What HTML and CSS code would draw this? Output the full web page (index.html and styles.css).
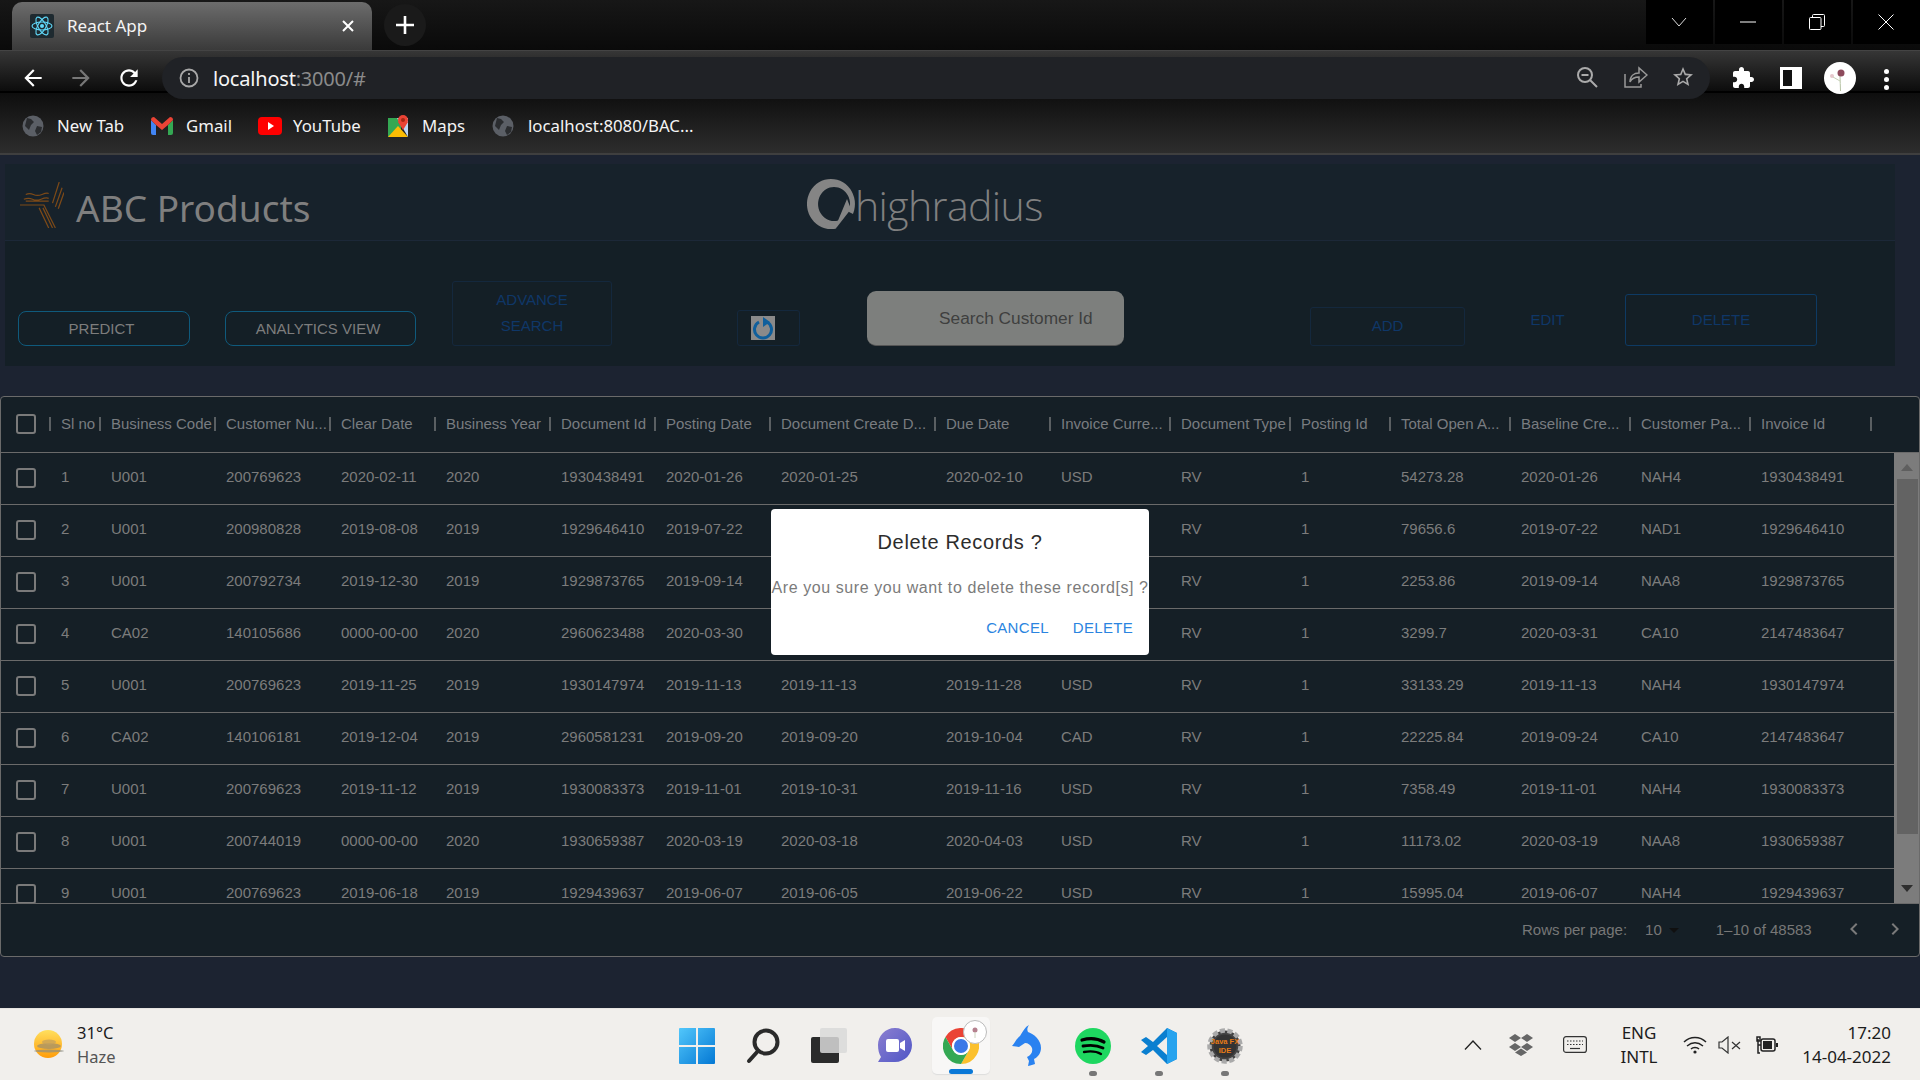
FILE: index.html
```html
<!DOCTYPE html>
<html lang="en">
<head>
<meta charset="utf-8">
<title>React App</title>
<link rel="stylesheet" href="styles.css">
</head>
<body>
<header class="chrome">
  <div class="tabstrip">
    <div class="tab">
      <span class="favicon"><svg viewBox="0 0 24 24" width="24" height="24" fill="none" stroke="#61dafb" stroke-width="1.1"><ellipse cx="12" cy="12" rx="10" ry="4"/><ellipse cx="12" cy="12" rx="10" ry="4" transform="rotate(60 12 12)"/><ellipse cx="12" cy="12" rx="10" ry="4" transform="rotate(120 12 12)"/><circle cx="12" cy="12" r="2" fill="#61dafb" stroke="none"/></svg></span>
      <span class="tab-title">React App</span>
      <svg class="tab-close" viewBox="0 0 12 12" width="12" height="12" stroke="#fff" stroke-width="2"><path d="M1 1l10 10M11 1L1 11"/></svg>
    </div>
    <div class="newtab"><svg viewBox="0 0 18 18" width="18" height="18" stroke="#fff" stroke-width="2.6"><path d="M9 0v18M0 9h18"/></svg></div>
    <div class="winctl">
      <span class="winbtn"><svg viewBox="0 0 16 10" width="16" height="10" fill="none" stroke="#ddd"><path d="M1 1l7 8 7-8"/></svg></span>
      <span class="winbtn"><svg viewBox="0 0 16 2" width="16" height="2" stroke="#fff"><path d="M0 1h16"/></svg></span>
      <span class="winbtn"><svg viewBox="0 0 16 16" width="16" height="16" fill="none" stroke="#fff"><rect x=".5" y="3.5" width="11.5" height="12" rx="1"/><path d="M3.500 3V1.500q0-1 1-1h10q1 0 1 1v10q0 1-1 1H12"/></svg></span>
      <span class="winbtn"><svg viewBox="0 0 16 16" width="16" height="16" stroke="#fff"><path d="M.5.500l15 15M15.500.500l-15 15"/></svg></span>
    </div>
  </div>
  <div class="toolbar">
    <svg class="nav nav-back" viewBox="0 0 24 24" fill="#fff"><path d="M20 11H7.830l5.590-5.590L12 4l-8 8 8 8 1.410-1.410L7.830 13H20v-2z"/></svg>
    <svg class="nav nav-fwd" viewBox="0 0 24 24" fill="#777"><path d="M4 13h12.170l-5.590 5.590L12 20l8-8-8-8-1.410 1.410L16.170 11H4v2z"/></svg>
    <svg class="nav nav-reload" viewBox="0 0 24 24" fill="#fff"><path d="M17.650 6.350C16.200 4.900 14.210 4 12 4c-4.420 0-7.990 3.580-7.990 8s3.570 8 7.990 8c3.730 0 6.840-2.550 7.730-6h-2.080c-.82 2.330-3.040 4-5.650 4-3.310 0-6-2.690-6-6s2.690-6 6-6c1.660 0 3.140.69 4.220 1.780L13 11h7V4l-2.350 2.350z"/></svg>
    <div class="omnibox">
      <svg class="info" viewBox="0 0 20 20" width="20" height="20" fill="none" stroke="#a8a8a8" stroke-width="1.800"><circle cx="10" cy="10" r="8.500"/><path d="M10 9v6M10 5v2"/></svg>
      <span class="url">localhost<span class="url-dim">:3000/#</span></span>
      <svg class="omni-zoom" viewBox="0 0 22 22" width="22" height="22" fill="none" stroke="#aaa" stroke-width="2"><circle cx="9" cy="9" r="7"/><path d="M14 14l7 7M5.500 9h7"/></svg>
      <svg class="omni-share" viewBox="0 0 24 22" width="24" height="22" fill="none" stroke="#999" stroke-width="1.500"><path d="M1 8v13h16v-3"/><path d="M6 16c0-6 4-9 9-9V2l8 7-8 7v-5c-4 0-7 1-9 5z"/></svg>
      <svg class="omni-star" viewBox="0 0 24 24" width="24" height="24" fill="#aaa"><path d="M22 9.240l-7.190-.62L12 2 9.190 8.630 2 9.240l5.460 4.730L5.820 21 12 17.270 18.180 21l-1.630-7.030L22 9.240zM12 15.400l-3.760 2.270 1-4.280-3.320-2.880 4.380-.38L12 6.100l1.710 4.040 4.380.38-3.320 2.880 1 4.280L12 15.400z"/></svg>
    </div>
    <svg class="ext" viewBox="0 0 24 24" width="24" height="24" fill="#fff"><path d="M20.500 11H19V7c0-1.100-.9-2-2-2h-4V3.500C13 2.120 11.880 1 10.500 1S8 2.120 8 3.500V5H4c-1.100 0-1.990.9-1.990 2v3.800H3.500c1.490 0 2.700 1.210 2.700 2.700s-1.210 2.700-2.700 2.700H2V20c0 1.100.9 2 2 2h3.800v-1.500c0-1.490 1.210-2.700 2.700-2.700 1.490 0 2.700 1.210 2.700 2.700V22H17c1.100 0 2-.9 2-2v-4h1.500c1.380 0 2.500-1.120 2.500-2.500S21.880 11 20.500 11z"/></svg>
    <span class="sidepanel"></span>
    <span class="avatar"><svg viewBox="0 0 32 32" width="32" height="32"><path d="M16 14c0 5 .5 10 .5 15" stroke="#b6c2a4" fill="none"/><circle cx="17" cy="11" r="3.500" fill="#8d4b5c"/><circle cx="8" cy="14" r="2" fill="#e6c7cc"/><path d="M9 15l7 4" stroke="#c6d0b6" fill="none"/></svg></span>
    <span class="kebab"><i></i><i></i><i></i></span>
  </div>
  <div class="bookmarks">
    <span class="bm bm-newtab"><svg viewBox="0 0 22 22" width="22" height="22"><circle cx="11" cy="11" r="10.500" fill="#5b5f66"/><path d="M5 3l4 1 3 3-3 3-2 5-4-4zM15 11l5 1-1 5-4 3-2-4z" fill="#2a2c2f"/></svg><span>New Tab</span></span>
    <span class="bm bm-gmail"><svg viewBox="0 0 22 18" width="22" height="18"><path d="M0 3v13q0 2 2 2h3V8z" fill="#4285f4"/><path d="M22 3v13q0 2-2 2h-3V8z" fill="#34a853"/><path d="M0 3q0-3 3-3l8 7 8-7q3 0 3 3l-5 5-6 5-6-5z" fill="#ea4335"/></svg><span>Gmail</span></span>
    <span class="bm bm-yt"><svg viewBox="0 0 24 18" width="24" height="18"><rect width="24" height="18" rx="4" fill="#f00"/><path d="M10 5l6 4-6 4z" fill="#fff"/></svg><span>YouTube</span></span>
    <span class="bm bm-maps"><svg viewBox="0 0 22 24" width="22" height="24"><path d="M1 4h13v19H1z" fill="#34a853"/><path d="M1 23l10-11 10 11z" fill="#fbbc04"/><path d="M10 4h11v19z" fill="#bcd6f7"/><circle cx="16" cy="6" r="5" fill="#ea4335"/><path d="M11 8l5 8 5-8z" fill="#ea4335"/><circle cx="16" cy="6" r="2" fill="#a52714"/></svg><span>Maps</span></span>
    <span class="bm bm-local"><svg viewBox="0 0 22 22" width="22" height="22"><circle cx="11" cy="11" r="10.500" fill="#5b5f66"/><path d="M5 3l4 1 3 3-3 3-2 5-4-4zM15 11l5 1-1 5-4 3-2-4z" fill="#2a2c2f"/></svg><span>localhost:8080/BAC...</span></span>
  </div>
</header>

<main class="page">
  <section class="brand">
    <svg class="abc-logo" viewBox="0 0 46 48" width="44" height="46" fill="none" stroke="#7d4a18" stroke-width="1.300"><path d="M41 0L34 22M44 6L37 26M46 11L40 28M0 24h25l12 24M24 27l10 21M20 27l10 21"/><path d="M6 13q4-2 8 0t9 0 7-1M4 18q5-2 9 0t9 0 8-1M6 20h24"/></svg>
    <span class="abc-name">ABC Products</span>
    <svg class="hr-logo" viewBox="0 0 48 50" width="48" height="50"><path fill-rule="evenodd" fill="#858585" d="M24 0a24 25 0 1 1-.1 0zM27 8a16 17 0 1 0 .1 0z"/><path d="M36 30L48 36 38 50 29 50z" fill="#17222b"/><path d="M40 20L44 30 30 48 20 49 14 36 20 47 30 44z" fill="#858585"/></svg>
    <span class="hr-name">highradius</span>
  </section>
  <section class="actions">
    <button class="btn btn-predict">PREDICT</button>
    <button class="btn btn-analytics">ANALYTICS VIEW</button>
    <button class="btn-blue btn-advance">ADVANCE SEARCH</button>
    <button class="btn-blue btn-refresh"><svg viewBox="0 0 24 24" width="24" height="24"><rect width="24" height="24" fill="#8a8a8a"/><path d="M8 6a8.500 8.500 0 1 0 8 0" fill="none" stroke="#0f5f9c" stroke-width="3"/><path d="M12 1l7 5-7 5z" fill="#0f5f9c"/></svg></button>
    <div class="search"><span>Search Customer Id</span></div>
    <button class="btn-blue btn-add">ADD</button>
    <span class="btn-edit">EDIT</span>
    <button class="btn-blue btn-delete">DELETE</button>
  </section>

  <section class="grid-paper">
    <div class="grid-head cols">
      <div class="hc"><span class="cb"></span></div>
      <div class="hc">Sl no</div>
      <div class="hc">Business Code</div>
      <div class="hc">Customer Nu...</div>
      <div class="hc">Clear Date</div>
      <div class="hc">Business Year</div>
      <div class="hc">Document Id</div>
      <div class="hc">Posting Date</div>
      <div class="hc">Document Create D...</div>
      <div class="hc">Due Date</div>
      <div class="hc">Invoice Curre...</div>
      <div class="hc">Document Type</div>
      <div class="hc">Posting Id</div>
      <div class="hc">Total Open A...</div>
      <div class="hc">Baseline Cre...</div>
      <div class="hc">Customer Pa...</div>
      <div class="hc">Invoice Id</div>
    </div>
    <div class="grid-body">
      <div class="rows">
        <div class="row cols"><div class="c"><span class="cb"></span></div><div class="c">1</div><div class="c">U001</div><div class="c">200769623</div><div class="c">2020-02-11</div><div class="c">2020</div><div class="c">1930438491</div><div class="c">2020-01-26</div><div class="c">2020-01-25</div><div class="c">2020-02-10</div><div class="c">USD</div><div class="c">RV</div><div class="c">1</div><div class="c">54273.28</div><div class="c">2020-01-26</div><div class="c">NAH4</div><div class="c">1930438491</div></div>
        <div class="row cols"><div class="c"><span class="cb"></span></div><div class="c">2</div><div class="c">U001</div><div class="c">200980828</div><div class="c">2019-08-08</div><div class="c">2019</div><div class="c">1929646410</div><div class="c">2019-07-22</div><div class="c"></div><div class="c"></div><div class="c"></div><div class="c">RV</div><div class="c">1</div><div class="c">79656.6</div><div class="c">2019-07-22</div><div class="c">NAD1</div><div class="c">1929646410</div></div>
        <div class="row cols"><div class="c"><span class="cb"></span></div><div class="c">3</div><div class="c">U001</div><div class="c">200792734</div><div class="c">2019-12-30</div><div class="c">2019</div><div class="c">1929873765</div><div class="c">2019-09-14</div><div class="c"></div><div class="c"></div><div class="c"></div><div class="c">RV</div><div class="c">1</div><div class="c">2253.86</div><div class="c">2019-09-14</div><div class="c">NAA8</div><div class="c">1929873765</div></div>
        <div class="row cols"><div class="c"><span class="cb"></span></div><div class="c">4</div><div class="c">CA02</div><div class="c">140105686</div><div class="c">0000-00-00</div><div class="c">2020</div><div class="c">2960623488</div><div class="c">2020-03-30</div><div class="c"></div><div class="c"></div><div class="c"></div><div class="c">RV</div><div class="c">1</div><div class="c">3299.7</div><div class="c">2020-03-31</div><div class="c">CA10</div><div class="c">2147483647</div></div>
        <div class="row cols"><div class="c"><span class="cb"></span></div><div class="c">5</div><div class="c">U001</div><div class="c">200769623</div><div class="c">2019-11-25</div><div class="c">2019</div><div class="c">1930147974</div><div class="c">2019-11-13</div><div class="c">2019-11-13</div><div class="c">2019-11-28</div><div class="c">USD</div><div class="c">RV</div><div class="c">1</div><div class="c">33133.29</div><div class="c">2019-11-13</div><div class="c">NAH4</div><div class="c">1930147974</div></div>
        <div class="row cols"><div class="c"><span class="cb"></span></div><div class="c">6</div><div class="c">CA02</div><div class="c">140106181</div><div class="c">2019-12-04</div><div class="c">2019</div><div class="c">2960581231</div><div class="c">2019-09-20</div><div class="c">2019-09-20</div><div class="c">2019-10-04</div><div class="c">CAD</div><div class="c">RV</div><div class="c">1</div><div class="c">22225.84</div><div class="c">2019-09-24</div><div class="c">CA10</div><div class="c">2147483647</div></div>
        <div class="row cols"><div class="c"><span class="cb"></span></div><div class="c">7</div><div class="c">U001</div><div class="c">200769623</div><div class="c">2019-11-12</div><div class="c">2019</div><div class="c">1930083373</div><div class="c">2019-11-01</div><div class="c">2019-10-31</div><div class="c">2019-11-16</div><div class="c">USD</div><div class="c">RV</div><div class="c">1</div><div class="c">7358.49</div><div class="c">2019-11-01</div><div class="c">NAH4</div><div class="c">1930083373</div></div>
        <div class="row cols"><div class="c"><span class="cb"></span></div><div class="c">8</div><div class="c">U001</div><div class="c">200744019</div><div class="c">0000-00-00</div><div class="c">2020</div><div class="c">1930659387</div><div class="c">2020-03-19</div><div class="c">2020-03-18</div><div class="c">2020-04-03</div><div class="c">USD</div><div class="c">RV</div><div class="c">1</div><div class="c">11173.02</div><div class="c">2020-03-19</div><div class="c">NAA8</div><div class="c">1930659387</div></div>
        <div class="row cols"><div class="c"><span class="cb"></span></div><div class="c">9</div><div class="c">U001</div><div class="c">200769623</div><div class="c">2019-06-18</div><div class="c">2019</div><div class="c">1929439637</div><div class="c">2019-06-07</div><div class="c">2019-06-05</div><div class="c">2019-06-22</div><div class="c">USD</div><div class="c">RV</div><div class="c">1</div><div class="c">15995.04</div><div class="c">2019-06-07</div><div class="c">NAH4</div><div class="c">1929439637</div></div>
      </div>
      <div class="scrollbar">
        <span class="sb-up"></span>
        <span class="sb-thumb"></span>
        <span class="sb-down"></span>
      </div>
    </div>
    <div class="grid-foot">
      <span class="rpp">Rows per page:</span>
      <span class="rpp-val">10</span><span class="rpp-caret"></span>
      <span class="range">1–10 of 48583</span>
      <svg class="pg pg-prev" viewBox="0 0 24 24" width="24" height="24" fill="#7a7a7a"><path d="M15.410 7.410L14 6l-6 6 6 6 1.410-1.410L10.830 12z"/></svg>
      <svg class="pg pg-next" viewBox="0 0 24 24" width="24" height="24" fill="#7a7a7a"><path d="M10 6L8.590 7.410 13.170 12l-4.580 4.590L10 18l6-6z"/></svg>
    </div>
  </section>
</main>

<footer class="taskbar">
  <div class="weather">
    <svg viewBox="0 0 32 30" width="32" height="30"><defs><linearGradient id="sun" x1="0" y1="0" x2="0" y2="1"><stop offset="0" stop-color="#ffdf5e"/><stop offset="1" stop-color="#ff9d0a"/></linearGradient></defs><circle cx="16" cy="14" r="14" fill="url(#sun)"/><ellipse cx="17" cy="16" rx="12" ry="3" fill="#a89266" opacity=".8"/><ellipse cx="17" cy="21" rx="15" ry="1.500" fill="#8d8d80" opacity=".7"/><ellipse cx="17" cy="12" rx="7" ry="2.500" fill="#c7a35c" opacity=".8"/></svg>
    <div class="weather-text"><span class="temp">31°C</span><span class="cond">Haze</span></div>
  </div>
  <div class="apps">
    <span class="app"><svg viewBox="0 0 36 36" width="36" height="36"><defs><linearGradient id="win" x1="0" y1="0" x2="1" y2="1"><stop offset="0" stop-color="#52c7fb"/><stop offset="1" stop-color="#0478d4"/></linearGradient></defs><path d="M1 0h16v17H0V1q0-1 1-1zM19 0h16q1 0 1 1v16H19zM0 19h17v17H1q-1 0-1-1zM19 19h17v16q0 1-1 1H19z" fill="url(#win)"/></svg></span>
    <span class="app"><svg viewBox="0 0 34 36" width="34" height="36" fill="none" stroke="#2a2a2a" stroke-width="4" stroke-linecap="round"><circle cx="20" cy="14" r="11.500"/><path d="M12 23L3 33"/></svg></span>
    <span class="app app-tv"><svg viewBox="0 0 36 36" width="36" height="36"><rect x="0" y="9" width="28" height="26" rx="2" fill="#2b2b2b"/><rect x="9" y="0" width="27" height="25" rx="2" fill="#d9d9d9" opacity=".85"/></svg></span>
    <span class="app"><svg viewBox="0 0 36 36" width="36" height="36"><defs><linearGradient id="chat" x1="0" y1="0" x2="1" y2="1"><stop offset="0" stop-color="#8c7fd0"/><stop offset="1" stop-color="#4f56c6"/></linearGradient></defs><path d="M18 0c10 0 17 8 17 17s-7 17-17 17H1l3-5C2 26 1 22 1 17 1 8 8 0 18 0z" fill="url(#chat)"/><rect x="9" y="11" width="13" height="13" rx="2" fill="#fff"/><path d="M23 15l5-3v11l-5-3z" fill="#fff"/></svg></span>
    <span class="app app-active"><span class="chrome-ico"><svg viewBox="0 0 36 36" width="36" height="36"><path d="M2.400 9A18 18 0 0 1 33.600 9H18A9 9 0 0 0 10.200 22.500z" fill="#ea4335"/><path d="M33.600 9A18 18 0 0 1 18 36L25.800 22.500A9 9 0 0 0 18 9z" fill="#fbc02d"/><path d="M2.400 9L10.200 22.500A9 9 0 0 0 25.800 22.500L18 36A18 18 0 0 1 2.400 9z" fill="#34a853"/><circle cx="18" cy="18" r="9" fill="#fff"/><circle cx="18" cy="18" r="7" fill="#3b78e7"/></svg></span><span class="chrome-badge"><svg viewBox="0 0 24 24" width="24" height="24"><circle cx="12" cy="12" r="11.500" fill="#fff" stroke="#bbb"/><circle cx="12" cy="10" r="2.500" fill="#b5818e"/><path d="M12 12v6" stroke="#ccd4c0"/></svg></span><span class="run run-blue"></span></span>
    <span class="app"><svg viewBox="0 0 30 42" width="30" height="42"><path d="M17 0c-2 3-2 5-1 7 6 2 13 8 13 16 0 5-3 9-7 11l1 5c-2 1-4 1-7 2l1-5-2-4c4-2 6-5 5-9-1-3-4-5-7-5l-6 4-7-1c3-3 4-7 8-10 3-5 5-9 9-11z" fill="#2a82f0"/></svg></span>
    <span class="app"><svg viewBox="0 0 36 36" width="36" height="36" fill="none" stroke="#000" stroke-linecap="round"><circle cx="18" cy="18" r="18" fill="#1ed760" stroke="none"/><path d="M7 12c7-2 15-2 22 2" stroke-width="3.200"/><path d="M8 18c6-1 14-1 20 2" stroke-width="2.800"/><path d="M9 24c6-1 12-1 17 2" stroke-width="2.300"/></svg><span class="run"></span></span>
    <span class="app"><svg viewBox="0 0 36 36" width="36" height="36"><path d="M26 0l10 5v26l-10 5-14-14-7 5-5-3 7-6-7-6 5-3 7 5z" fill="#0a7fd0"/><path d="M26 9L16 18l10 9z" fill="#f0eeeb"/><path d="M26 0l10 5v26l-10 5z" fill="#27a3ee"/></svg><span class="run"></span></span>
    <span class="app"><svg viewBox="0 0 36 36" width="36" height="36"><circle cx="18" cy="18" r="15.500" fill="#444" stroke="#aaa" stroke-width="4.500" stroke-dasharray="5 2.500"/><circle cx="18" cy="18" r="11.500" fill="#333"/><text x="18" y="16" class="fx-t">Java FX</text><text x="18" y="25" class="fx-t">IDE</text></svg><span class="run"></span></span>
  </div>
  <div class="tray">
    <span class="tr tr-chev"><svg viewBox="0 0 18 10" width="18" height="10" fill="none" stroke="#222" stroke-width="1.300"><path d="M1 9.500l8-8.500 8 8.500"/></svg></span>
    <span class="tr tr-drop"><svg viewBox="0 0 24 22" width="24" height="22" fill="#666"><path d="M6 0l6 4-6 4-6-4zM18 0l6 4-6 4-6-4zM6 9l6 4-6 4-6-4zM18 9l6 4-6 4-6-4zM12 14.500l6 4-6 3.500-6-3.500z"/></svg></span>
    <span class="tr tr-kb"><svg viewBox="0 0 24 18" width="24" height="18" fill="none" stroke="#333" stroke-width="1.200"><rect x=".6" y=".6" width="22.800" height="15.800" rx="2.500"/><path d="M4 5h16M4 8.500h16" stroke-dasharray="1.500 1.500"/><path d="M7 12.500h10"/></svg></span>
    <span class="tr tr-lang">ENG<br>INTL</span>
    <span class="tr tr-wifi"><svg viewBox="0 0 24 18" width="24" height="18" fill="none" stroke="#222" stroke-width="1.500"><path d="M1 6c6-6 16-6 22 0M4 10c5-4 11-4 16 0M8 13c2-2 6-2 8 0"/><circle cx="12" cy="16" r="1.600" fill="#222" stroke="none"/></svg></span>
    <span class="tr tr-vol"><svg viewBox="0 0 24 18" width="24" height="18" fill="none" stroke="#333" stroke-width="1.200"><path d="M1 6v6h3l6 5V1L4 6zM14 6l8 7M22 6l-8 7"/></svg></span>
    <span class="tr tr-bat"><svg viewBox="0 0 24 18" width="24" height="18" fill="#222"><path d="M7 9H4V3M3 1v4h3V1zM4 9v8h2" fill="none" stroke="#222" stroke-width="1.500"/><rect x="7" y="3" width="14" height="12" rx="2" fill="none" stroke="#222" stroke-width="1.500"/><rect x="9" y="5" width="9" height="8"/><rect x="22" y="7" width="2" height="4"/></svg></span>
    <div class="clock"><span>17:20</span><span>14-04-2022</span></div>
  </div>
</footer>

<div class="dialog">
  <h2 class="dlg-title">Delete Records ?</h2>
  <p class="dlg-text">Are you sure you want to delete these record[s] ?</p>
  <div class="dlg-actions"><span class="dlg-btn">CANCEL</span><span class="dlg-btn">DELETE</span></div>
</div>
</body>
</html>
```
FILE: styles.css
```css
* { box-sizing: border-box; }
html, body { margin: 0; padding: 0; }
body { width: 1920px; height: 1080px; overflow: hidden; display: flex; flex-direction: column; font-family: "Liberation Sans", Arial, sans-serif; background: #1c2331; }
button { font-family: inherit; background: none; padding: 0; cursor: pointer; }

/* browser chrome */
.chrome { height: 155px; flex: none; font-family: "Noto Sans", sans-serif; color: #f4f4f4; }
.tabstrip { height: 50px; background: linear-gradient(#171717, #0a0a0a); display: flex; padding-left: 12px; align-items: flex-start; }
.tab { width: 360px; height: 48px; margin-top: 2px; border-radius: 10px 10px 0 0; background: linear-gradient(#6c6c6c, #3a3a3a); display: flex; align-items: center; padding: 0 0 0 18px; }
.favicon { width: 24px; height: 24px; background: #1e2a30; border-radius: 2px; display: block; }
.favicon svg { display: block; }
.tab-title { margin-left: 13px; font-size: 17px; width: 275px; padding-bottom: 2px; }
.newtab { width: 42px; height: 42px; margin: 4px 0 0 12px; border-radius: 50%; background: #1a1a1a; display: flex; align-items: center; justify-content: center; }
.winctl { margin-left: auto; display: flex; gap: 2px; }
.winbtn { width: 67px; height: 44px; background: #000; display: flex; align-items: center; justify-content: center; padding-right: 2px; }
.toolbar { height: 43px; background: linear-gradient(#363636, #0c0c0c); display: flex; align-items: flex-start; position: relative; border-top: 1px solid #444; border-bottom: 2px solid #000; }
.nav { width: 26px; height: 26px; flex: none; margin-top: 14px; }
.nav-back { margin-left: 20px; }
.nav-fwd { margin-left: 22px; }
.nav-reload { margin-left: 22px; }
.omnibox { width: 1548px; height: 42px; margin: 6px 0 -8px 20px; background: #202226; border-radius: 21px; display: flex; align-items: center; flex: none; z-index: 1; }
.info { margin-left: 17px; }
.url { margin-left: 14px; font-size: 20px; color: #f6f6f6; width: 1137px; letter-spacing: -.2px; }
.url-dim { color: #8b8b8b; }
.omni-zoom { margin-left: 226px; margin-top: -2px; }
.omni-share { margin-left: 26px; margin-top: -2px; }
.omni-star { margin-left: 23px; margin-top: -2px; }
.ext { margin: 15px 0 0 21px; }
.sidepanel { width: 22px; height: 22px; margin: 16px 0 0 25px; border: 3px solid #fff; border-right-width: 10px; background: #111; display: block; }
.avatar { width: 32px; height: 32px; margin: 11px 0 0 22px; background: #fff; border-radius: 50%; display: block; overflow: hidden; }
.kebab { margin: 18px 0 0 28px; display: flex; flex-direction: column; gap: 3px; }
.kebab i { width: 5px; height: 5px; border-radius: 50%; background: #fff; display: block; }
.bookmarks { height: 62px; background: linear-gradient(#0e0e0e, #2d2d2d); display: flex; align-items: center; border-bottom: 2px solid #3f3f3f; font-size: 16.800px; padding-top: 5px; }
.bm { display: flex; align-items: center; gap: 13px; flex: none; }
.bm-newtab { margin-left: 22px; width: 129px; }
.bm-gmail { width: 107px; }
.bm-yt { width: 129px; gap: 11px; margin-left: 0; }
.bm-maps { width: 104px; gap: 13px; }
.bm-local { gap: 14px; margin-left: 1px; }

/* page */
.page { flex: 1; padding-top: 9px; position: relative; }
.brand { margin: 0 25px 0 5px; height: 77px; background: #17222b; border-bottom: 1px solid #1c2838; display: flex; align-items: center; padding-left: 15px; }
.abc-logo { margin-top: 6px; }
.abc-name { margin-left: 12px; font-family: "Noto Sans", sans-serif; font-size: 37px; color: #7f7f7f; width: 731px; margin-top: 11px; }
.hr-logo { margin-top: 3px; flex: none; }
.hr-name { margin-left: 0; font-family: "Open Sans", sans-serif; font-weight: 300; font-size: 41px; color: #808080; margin-top: 5px; letter-spacing: -.6px; }
.actions { margin: 0 25px 0 5px; height: 125px; background: #141f26; display: flex; align-items: flex-end; padding: 0 0 20px 13px; }
.btn { height: 35px; border: 1px solid #0f5a7c; border-radius: 8px; color: #7d7d7d; font-size: 15px; padding-right: 5px; }
.btn-predict { width: 172px; }
.btn-analytics { width: 191px; margin-left: 35px; }
.btn-blue { border: 1px solid #14283d; border-radius: 3px; color: #0f3768; font-size: 15px; line-height: 26px; }
.btn-advance { width: 160px; height: 65px; margin-left: 36px; padding: 0 30px 2px; }
.btn-refresh { width: 63px; height: 36px; margin-left: 125px; display: flex; align-items: center; padding-left: 13px; }
.btn-refresh svg { display: block; }
.search { width: 257px; height: 55px; margin-left: 67px; border-radius: 9px; background: #7d7f7d; color: #3f3f3f; font-size: 17.300px; display: flex; align-items: center; padding-left: 72px; border-bottom: 1px solid #555; }
.btn-add { width: 155px; height: 39px; margin-left: 186px; padding-top: 3px; padding-bottom: 5px; }
.btn-edit { width: 165px; margin-bottom: 18px; text-align: center; color: #0f3768; font-size: 15px; }
.btn-delete { width: 192px; height: 52px; margin-left: -5px; border-color: #0e3a63; padding-bottom: 1px; }

/* grid */
.grid-paper { margin-top: 30px; height: 561px; background: #151f26; border: 1px solid #6a6a6a; border-radius: 4px; color: #7c7c7c; font-size: 15px; display: flex; flex-direction: column; }
.cols { display: grid; grid-template-columns: 50px 50px 115px 115px 105px 115px 105px 115px 165px 115px 120px 120px 100px 120px 120px 120px 121px; }
.grid-head { height: 56px; flex: none; border-bottom: 1px solid #6a6a6a; align-items: center; padding-bottom: 2px; }
.hc { display: flex; align-items: center; justify-content: space-between; padding-left: 10px; white-space: nowrap; color: #797c80; }
.hc:first-child { padding-left: 15px; }
.hc::after { content: ""; width: 2px; height: 14px; background: #5a5f62; flex: none; }
.grid-body { height: 451px; flex: none; display: flex; border-bottom: 1px solid #6a6a6a; overflow: hidden; }
.rows { width: 1893px; flex: none; overflow: hidden; }
.row { height: 52px; border-bottom: 1px solid #6a6a6a; align-items: center; padding-bottom: 1px; }
.c { padding-left: 10px; padding-bottom: 3px; white-space: nowrap; }
.c:first-child { padding-left: 15px; padding-bottom: 0; display: flex; }
.cb { width: 20px; height: 20px; border: 2px solid #7a7a7a; border-radius: 3px; display: block; }
.scrollbar { width: 26px; flex: none; background: #7c7c7c; display: flex; flex-direction: column; align-items: center; }
.sb-up { width: 0; height: 0; margin-top: 11px; border: 6px solid transparent; border-top: 0; border-bottom: 7px solid #5f5f5f; }
.sb-thumb { width: 21px; height: 355px; margin-top: 8px; background: #636363; }
.sb-down { width: 0; height: 0; margin-top: auto; margin-bottom: 11px; border: 6px solid transparent; border-bottom: 0; border-top: 7px solid #2e2e2e; }
.grid-foot { flex: 1; display: flex; align-items: center; padding-left: 1521px; padding-bottom: 2px; font-size: 15px; color: #777; white-space: nowrap; }
.rpp-val { margin-left: 18px; }
.rpp-caret { width: 0; height: 0; margin-left: 7px; margin-top: 3px; border: 5px solid transparent; border-bottom: 0; border-top: 5px solid #101010; }
.range { margin-left: 37px; }
.pg { flex: none; }
.pg-prev { margin-left: 30px; }
.pg-next { margin-left: 17px; }

/* taskbar */
.taskbar { height: 72px; flex: none; background: #f1efec; border-top: 1px solid #e6e4e1; display: flex; align-items: center; font-family: "Noto Sans", sans-serif; color: #1c1c1c; position: relative; }
.weather { width: 664px; flex: none; display: flex; align-items: center; padding-left: 32px; padding-top: 1px; }
.weather-text { margin-left: 13px; display: flex; flex-direction: column; font-size: 16.500px; line-height: 24px; padding-top: 0; }
.cond { color: #555; }
.apps { display: flex; height: 100%; width: 594px; flex: none; }
.app { width: 66px; height: 57px; margin-top: 8px; display: flex; align-items: center; justify-content: center; position: relative; }
.app-active { background: #f8f7f6; border-radius: 5px; width: 58px; margin: 8px 4px 0; box-shadow: 0 1px 1px #ddd; }
.chrome-ico svg { display: block; }
.chrome-ico { display: block; }
.chrome-badge { position: absolute; left: 31px; top: 3px; }
.run { position: absolute; left: 50%; margin-left: -4px; bottom: -2px; width: 8px; height: 5px; border-radius: 3px; background: #777; }
.run-blue { width: 24px; margin-left: -12px; bottom: 0; background: #0a78d7; }
.fx-t { font-family: "Liberation Sans", sans-serif; font-size: 7.500px; font-weight: 700; fill: #e77c17; text-anchor: middle; }
.tray { margin-left: 191px; display: flex; align-items: center; height: 100%; }
.tr { display: flex; align-items: center; justify-content: center; flex: none; }
.tr-chev { width: 48px; }
.tr-drop { width: 48px; }
.tr-kb { width: 60px; }
.tr-lang { width: 68px; text-align: center; font-size: 17px; line-height: 24px; display: block; }
.tr-wifi { width: 44px; }
.tr-vol { width: 26px; }
.tr-bat { width: 46px; }
.clock { width: 102px; display: flex; flex-direction: column; align-items: flex-end; font-size: 17px; line-height: 24px; white-space: nowrap; }

/* dialog */
.dialog { position: absolute; left: 771px; top: 509px; width: 378px; height: 146px; background: #fff; border-radius: 4px; display: flex; flex-direction: column; align-items: center; white-space: nowrap; }
.dlg-title { margin: 21px 0 0; font-size: 20px; font-weight: 400; color: #2c2c2c; letter-spacing: .65px; line-height: 24px; }
.dlg-text { margin: 24px 0 0; font-size: 16px; color: #7b7b7b; letter-spacing: .58px; line-height: 20px; }
.dlg-actions { margin-top: 20px; align-self: flex-end; padding-right: 16px; display: flex; gap: 24px; }
.dlg-btn { color: #2a84e0; font-size: 15px; letter-spacing: .3px; line-height: 20px; }
```
